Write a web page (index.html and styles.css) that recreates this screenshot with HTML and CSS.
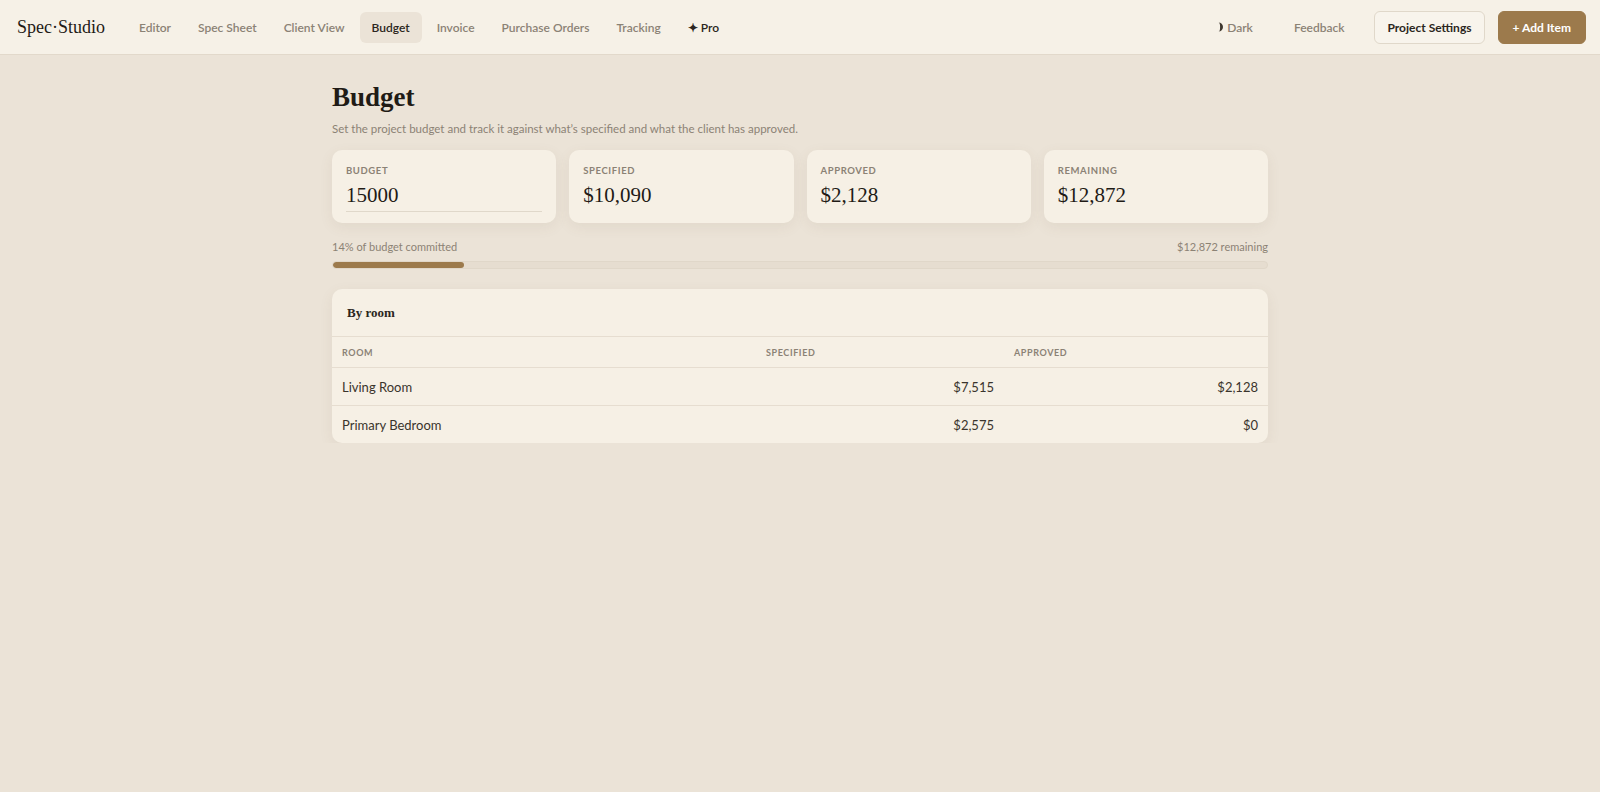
FILE: index.html
```html
<!DOCTYPE html>
<html lang="en">
<head>
    <meta charset="UTF-8">
    <title>Spec·Studio – Budget</title>
    <link rel="stylesheet" href="styles.css">
</head>
<body>
    <header class="topbar">
        <div class="logo">Spec·Studio</div>
        <nav class="tabs">
            <a class="tab">Editor</a>
            <a class="tab">Spec Sheet</a>
            <a class="tab">Client View</a>
            <a class="tab active">Budget</a>
            <a class="tab">Invoice</a>
            <a class="tab">Purchase Orders</a>
            <a class="tab">Tracking</a>
            <a class="tab pro">✦ Pro</a>
        </nav>
        <div class="actions">
            <a class="ghost dark-toggle">
                <svg class="moon" width="7" height="10" viewBox="0 0 7 10"><path d="M1.5 0.5 A4.5 4.5 0 0 1 1.5 9.5 A1.6 4.5 0 0 0 1.5 0.5 Z" fill="#3e372e"/></svg>
                Dark
            </a>
            <a class="ghost feedback">Feedback</a>
            <button class="btn btn-outline">Project Settings</button>
            <button class="btn btn-primary">+ Add Item</button>
        </div>
    </header>

    <main class="page">
        <h1 class="title">Budget</h1>
        <p class="subtitle">Set the project budget and track it against what’s specified and what the client has approved.</p>

        <div class="stats">
            <div class="stat">
                <div class="stat-label">Budget</div>
                <input class="stat-input" type="text" value="15000">
            </div>
            <div class="stat">
                <div class="stat-label">Specified</div>
                <div class="stat-value">$10,090</div>
            </div>
            <div class="stat">
                <div class="stat-label">Approved</div>
                <div class="stat-value">$2,128</div>
            </div>
            <div class="stat">
                <div class="stat-label">Remaining</div>
                <div class="stat-value">$12,872</div>
            </div>
        </div>

        <div class="progress-info">
            <span>14% of budget committed</span>
            <span>$12,872 remaining</span>
        </div>
        <div class="progress">
            <div class="progress-fill" style="width: 14%"></div>
        </div>

        <section class="panel">
            <h2 class="panel-title">By room</h2>
            <table class="rooms">
                <thead>
                    <tr>
                        <th class="col-room">Room</th>
                        <th class="col-spec">Specified</th>
                        <th>Approved</th>
                    </tr>
                </thead>
                <tbody>
                    <tr>
                        <td>Living Room</td>
                        <td class="num">$7,515</td>
                        <td class="num">$2,128</td>
                    </tr>
                    <tr>
                        <td>Primary Bedroom</td>
                        <td class="num">$2,575</td>
                        <td class="num">$0</td>
                    </tr>
                </tbody>
            </table>
        </section>
    </main>
</body>
</html>
```

FILE: styles.css
```css
body {
    margin: 0;
    font-family: 'Lato', 'Noto Sans', sans-serif;
    background-color: #ebe3d7;
    color: #2b2620;
}

.topbar {
    display: flex;
    align-items: center;
    height: 54px;
    padding: 0 14px 0 17px;
    background-color: #f6f1e7;
    border-bottom: 1px solid #e2d9cb;
}

.logo {
    font-family: 'Liberation Serif', serif;
    font-size: 18px;
    color: #1f1b16;
    margin-right: 22px;
}

.tabs {
    display: flex;
    align-items: center;
    gap: 3px;
}

.tab {
    font-size: 12px;
    font-weight: 600;
    color: #8b8275;
    padding: 8px 12px;
    border-radius: 6px;
    cursor: pointer;
}

.tab.active {
    background-color: #ebe3d7;
    color: #2b2620;
}

.tab.pro {
    color: #2b2620;
}

.actions {
    margin-left: auto;
    display: flex;
    align-items: center;
}

.ghost {
    font-size: 12px;
    font-weight: 600;
    color: #8b8275;
    padding: 8px 19px;
    cursor: pointer;
}

.feedback {
    padding-left: 22px;
    padding-right: 17px;
}

.dark-toggle {
    display: flex;
    align-items: center;
    gap: 3px;
}

.btn {
    font-family: 'Lato', sans-serif;
    font-size: 12px;
    font-weight: 700;
    height: 33px;
    padding: 0 12px;
    border-radius: 6px;
    cursor: pointer;
    margin-left: 13px;
}

.btn-outline {
    background-color: #f8f4ec;
    border: 1px solid #e0d8ca;
    color: #2b2620;
}

.btn-primary {
    background-color: #9c7a4c;
    border: 1px solid #9c7a4c;
    color: #fff;
    padding: 0 14px;
}

.page {
    width: 936px;
    margin: 0 auto;
    padding-top: 27px;
}

.title {
    font-family: 'Liberation Serif', serif;
    font-size: 27px;
    font-weight: 700;
    margin: 0;
    color: #1f1b16;
}

.subtitle {
    font-size: 11.5px;
    color: #8b8275;
    margin: 9px 0 15px;
}

.stats {
    display: grid;
    grid-template-columns: repeat(4, 1fr);
    gap: 13px;
}

.stat {
    background-color: #f6f0e5;
    border-radius: 10px;
    padding: 15px 14px 0;
    height: 58px;
    box-shadow: 0 4px 14px rgba(120, 95, 60, 0.08);
}

.stat-label {
    font-size: 9.5px;
    font-weight: 700;
    letter-spacing: 0.6px;
    text-transform: uppercase;
    color: #8b8275;
}

.stat-value,
.stat-input {
    font-family: 'Liberation Serif', serif;
    font-size: 21px;
    color: #1f1b16;
    margin-top: 7px;
}

.stat-input {
    display: block;
    width: 100%;
    box-sizing: border-box;
    background: transparent;
    border: none;
    border-bottom: 1px solid #e0d8ca;
    padding: 0 0 3px;
    outline: none;
}

.progress-info {
    display: flex;
    justify-content: space-between;
    font-size: 11px;
    color: #8b8275;
    margin-top: 17px;
}

.progress {
    height: 8px;
    margin-top: 8px;
    border-radius: 4px;
    background-color: #e6ddd0;
    border: 1px solid #e0d7c9;
    box-sizing: border-box;
    overflow: hidden;
}

.progress-fill {
    height: 100%;
    background-color: #9c7a4c;
    border-radius: 4px;
}

.panel {
    margin-top: 20px;
    background-color: #f6f0e5;
    border-radius: 10px;
    overflow: hidden;
    box-shadow: 0 4px 14px rgba(120, 95, 60, 0.08);
}

.panel-title {
    font-family: 'Liberation Serif', serif;
    font-size: 13px;
    font-weight: 700;
    margin: 0;
    padding: 16px 15px 15px;
    border-bottom: 1px solid #e6ddd0;
}

.rooms {
    width: 100%;
    border-collapse: collapse;
    table-layout: fixed;
}

.rooms th {
    font-size: 9px;
    font-weight: 700;
    letter-spacing: 0.6px;
    text-transform: uppercase;
    color: #8b8275;
    text-align: left;
    padding: 0 10px;
    height: 30px;
    border-bottom: 1px solid #e6ddd0;
}

.col-room {
    width: 404px;
}

.col-spec {
    width: 228px;
}

.rooms td {
    font-size: 13px;
    color: #3a342c;
    padding: 0 10px;
    height: 37px;
}

.rooms tbody tr + tr td {
    border-top: 1px solid #e6ddd0;
}

.num {
    text-align: right;
}
```
